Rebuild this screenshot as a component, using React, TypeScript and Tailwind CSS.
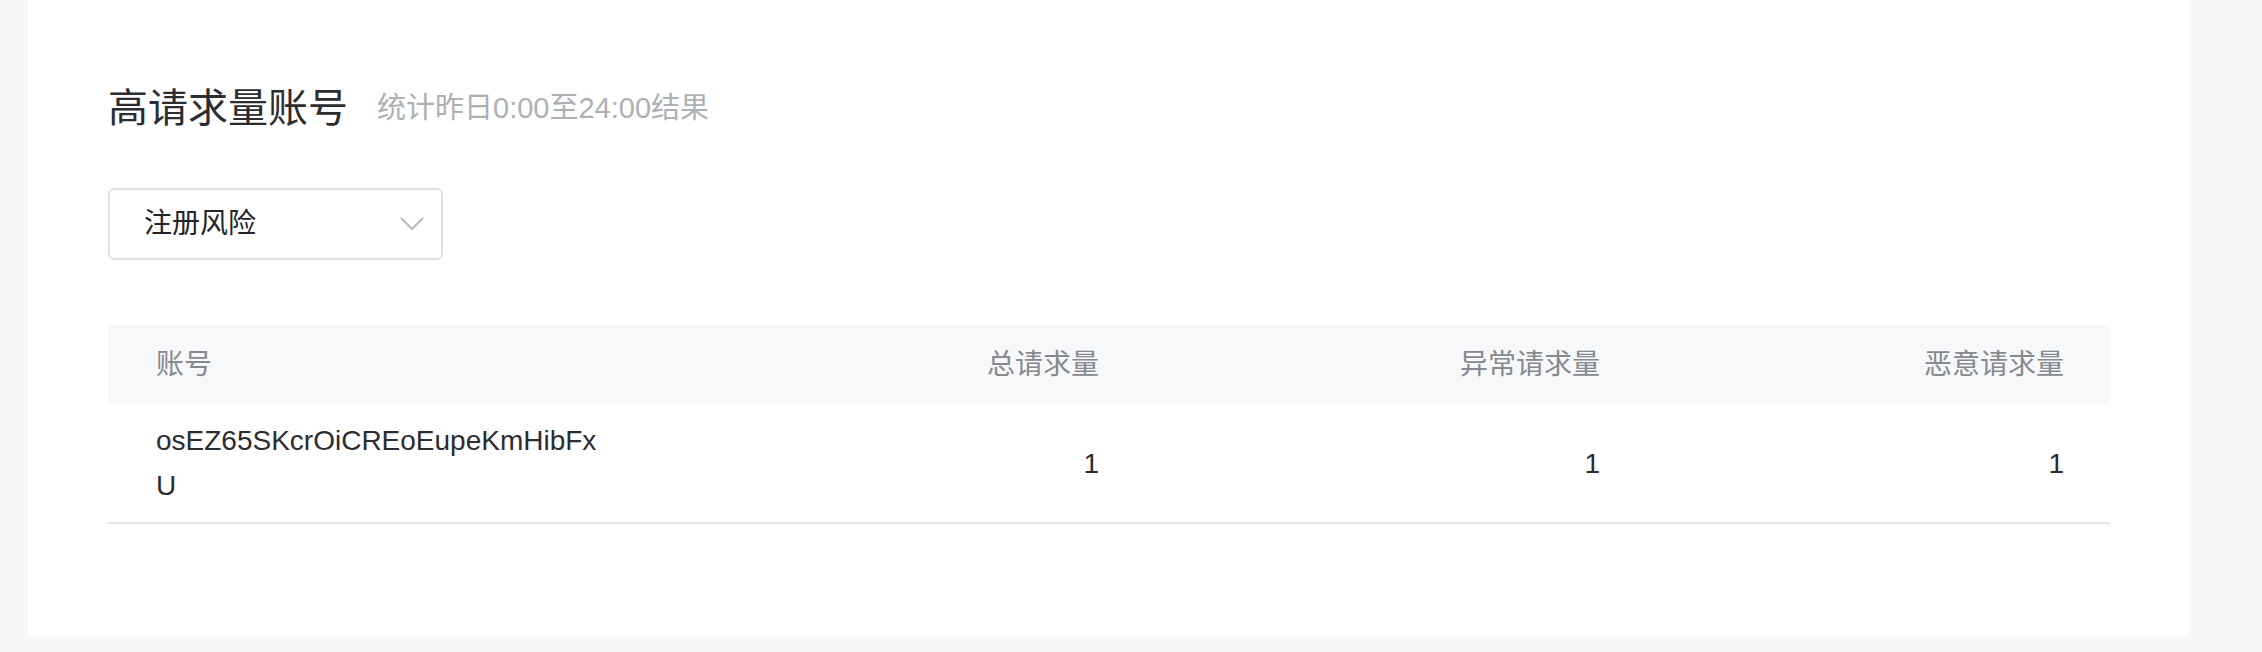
import React from "react";

interface Row {
  account: string;
  total: number;
  abnormal: number;
  malicious: number;
}

const rows: Row[] = [
  { account: "osEZ65SKcrOiCREoEupeKmHibFxU", total: 1, abnormal: 1, malicious: 1 },
];

const font = { fontFamily: '"Liberation Sans", "Noto Sans CJK SC", sans-serif' };

const Chevron = () => (
  <svg width="24" height="14" viewBox="0 0 24 14" fill="none">
    <path d="M1.5 1.5 L12 12 L22.5 1.5" stroke="#b4b7bd" strokeWidth="1.8" strokeLinecap="round" strokeLinejoin="round" />
  </svg>
);

export default function App() {
  return (
    <div className="min-h-[652px] w-full bg-[#f6f7f9]" style={font}>
      <div className="ml-[28px] w-[2162px] rounded-b-lg bg-white px-[80px] pt-[84px] pb-[113px]">
        {/* Title */}
        <div className="flex h-[48px] items-center gap-[29px]">
          <h2 className="text-[40px] leading-[48px] text-[#2b2d31]">高请求量账号</h2>
          <span className="text-[29px] leading-[48px] text-[#adb0b5]">统计昨日0:00至24:00结果</span>
        </div>

        {/* Select */}
        <div className="mt-[56px] flex h-[72px] w-[335px] items-center justify-between rounded-md border-2 border-[#dfe2e7] pl-[34px] pr-[17px]">
          <span className="text-[28px] text-[#222428]">注册风险</span>
          <Chevron />
        </div>

        {/* Table */}
        <div className="mt-[65px] w-full">
          <div className="grid h-[79px] grid-cols-[556px_483px_501px_1fr] items-center bg-[#f7f8fa] text-[28px] text-[#86898f]">
            <div className="px-[48px]">账号</div>
            <div className="px-[48px] text-right">总请求量</div>
            <div className="px-[48px] text-right">异常请求量</div>
            <div className="px-[46px] text-right">恶意请求量</div>
          </div>
          {rows.map((r) => (
            <div
              key={r.account}
              className="grid grid-cols-[556px_483px_501px_1fr] items-center border-b-2 border-[#e5e6eb] py-[14px] text-[28px] leading-[45px] text-[#2b2d31]"
            >
              <div className="px-[48px]">
                <div className="w-[450px] break-all">{r.account}</div>
              </div>
              <div className="px-[48px] text-right">{r.total}</div>
              <div className="px-[48px] text-right">{r.abnormal}</div>
              <div className="px-[46px] text-right">{r.malicious}</div>
            </div>
          ))}
        </div>
      </div>
    </div>
  );
}
